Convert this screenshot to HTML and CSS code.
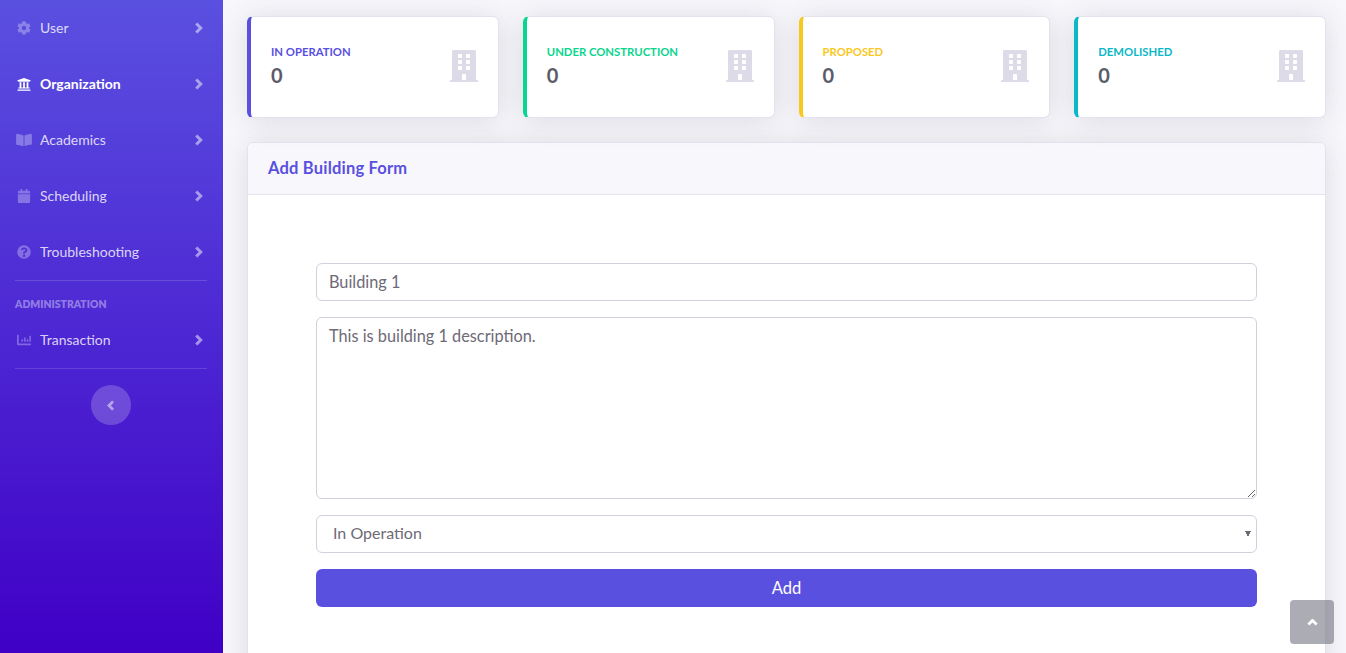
FILE: index.html
```html
<!DOCTYPE html>
<html lang="en">
<head>
    <meta charset="UTF-8">
    <meta name="viewport" content="width=device-width, initial-scale=1.0">
    <title>Add Building</title>
    <link rel="stylesheet" href="styles.css">
</head>
<body>
    <div class="wrapper">
        <nav class="sidebar">
            <a class="nav-item" href="#">
                <svg class="nav-icon" viewBox="0 0 512 512"><path d="M487 315l-43-25a196 196 0 0 0 0-68l43-25c5-3 7-9 5-14-11-36-30-68-55-95-4-4-10-5-15-2l-43 25a192 192 0 0 0-59-34V27c0-6-4-11-9-12-37-8-75-8-110 0-6 1-10 6-10 12v50a198 198 0 0 0-59 34L89 86c-5-3-11-2-15 2-25 27-44 59-55 95-2 5 0 11 5 14l43 25a196 196 0 0 0 0 68l-43 25c-5 3-7 9-5 14 11 36 30 68 55 95 4 4 10 5 15 2l43-25a192 192 0 0 0 59 34v50c0 6 4 11 10 12 37 8 75 8 110 0 5-1 9-6 9-12v-50a198 198 0 0 0 59-34l43 25c5 3 11 2 15-2 25-27 44-59 55-95 2-5 0-11-5-14zM256 336a80 80 0 1 1 0-160 80 80 0 0 1 0 160z"/></svg>
                <span class="nav-label">User</span>
                <svg class="nav-arrow" viewBox="0 0 10 16"><path d="M2 2l6 6-6 6"/></svg>
            </a>
            <a class="nav-item active" href="#">
                <svg class="nav-icon" viewBox="0 0 512 512"><path d="M496 128v16a8 8 0 0 1-8 8h-24v12c0 7-5 12-12 12H60c-7 0-12-5-12-12v-12H24a8 8 0 0 1-8-8v-16c0-3 2-6 5-7L253 33a8 8 0 0 1 6 0l232 88c3 1 5 4 5 7zm-24 328H40c-13 0-24 11-24 24v16c0 4 4 8 8 8h464c4 0 8-4 8-8v-16c0-13-11-24-24-24zM96 192v192H60c-7 0-12 5-12 12v28h416v-28c0-7-5-12-12-12h-36V192h-64v192h-64V192h-64v192h-64V192H96z"/></svg>
                <span class="nav-label">Organization</span>
                <svg class="nav-arrow" viewBox="0 0 10 16"><path d="M2 2l6 6-6 6"/></svg>
            </a>
            <a class="nav-item" href="#">
                <svg class="nav-icon wide" viewBox="0 0 576 512"><path d="M543 32c-55 3-164 15-231 56-5 3-8 8-8 14v362c0 11 13 19 24 14 69-35 168-44 217-47 17-1 31-14 31-31V63c0-18-15-32-33-31zM33 32C15 31 0 45 0 63v342c0 17 14 30 31 31 49 3 148 12 217 47 11 5 24-3 24-14V102c0-6-3-11-8-14C197 47 88 35 33 32z"/></svg>
                <span class="nav-label">Academics</span>
                <svg class="nav-arrow" viewBox="0 0 10 16"><path d="M2 2l6 6-6 6"/></svg>
            </a>
            <a class="nav-item" href="#">
                <svg class="nav-icon" viewBox="0 0 448 512"><path d="M12 192h424c7 0 12 5 12 12v260c0 27-21 48-48 48H48c-27 0-48-21-48-48V204c0-7 5-12 12-12zm436-44v-36c0-27-21-48-48-48h-48V12c0-7-5-12-12-12h-40c-7 0-12 5-12 12v52H160V12c0-7-5-12-12-12h-40c-7 0-12 5-12 12v52H48C21 64 0 85 0 112v36c0 7 5 12 12 12h424c7 0 12-5 12-12z"/></svg>
                <span class="nav-label">Scheduling</span>
                <svg class="nav-arrow" viewBox="0 0 10 16"><path d="M2 2l6 6-6 6"/></svg>
            </a>
            <a class="nav-item" href="#">
                <svg class="nav-icon" viewBox="0 0 512 512"><path d="M504 256a248 248 0 1 1-496 0 248 248 0 0 1 496 0zM263 90c-54 0-89 23-116 63-4 5-3 12 3 16l35 26c5 4 13 3 17-2 18-23 30-36 58-36 20 0 46 13 46 33 0 15-13 23-33 34-24 14-56 31-56 73v6c0 7 5 12 12 12h56c7 0 12-5 12-12v-3c0-29 85-31 85-110 0-59-61-100-119-100zm-7 254a46 46 0 1 0 0 92 46 46 0 0 0 0-92z"/></svg>
                <span class="nav-label">Troubleshooting</span>
                <svg class="nav-arrow" viewBox="0 0 10 16"><path d="M2 2l6 6-6 6"/></svg>
            </a>
            <hr class="nav-divider">
            <div class="nav-heading">ADMINISTRATION</div>
            <a class="nav-item short" href="#">
                <svg class="nav-icon" viewBox="0 0 512 512"><path d="M496 384H64V80c0-9-7-16-16-16H16C7 64 0 71 0 80v336c0 18 14 32 32 32h464c9 0 16-7 16-16v-32c0-9-7-16-16-16zM173 320h38c6 0 10-4 10-10v-69c0-6-4-10-10-10h-38c-6 0-10 4-10 10v69c0 6 4 10 10 10zm96 0h38c6 0 10-4 10-10V177c0-6-4-10-10-10h-38c-6 0-10 4-10 10v133c0 6 4 10 10 10zm96 0h38c6 0 10-4 10-10v-69c0-6-4-10-10-10h-38c-6 0-10 4-10 10v69c0 6 4 10 10 10zm96 0h38c6 0 10-4 10-10V113c0-6-4-10-10-10h-38c-6 0-10 4-10 10v197c0 6 4 10 10 10z"/></svg>
                <span class="nav-label">Transaction</span>
                <svg class="nav-arrow" viewBox="0 0 10 16"><path d="M2 2l6 6-6 6"/></svg>
            </a>
            <hr class="nav-divider last">
            <button class="sidebar-toggle">
                <svg viewBox="0 0 10 16"><path d="M8 2L2 8l6 6"/></svg>
            </button>
        </nav>

        <main class="content">
            <div class="stats">
                <div class="stat-card blue">
                    <div>
                        <div class="stat-title">IN OPERATION</div>
                        <div class="stat-value">0</div>
                    </div>
                    <svg class="stat-icon" viewBox="0 0 448 512"><use href="#building"/></svg>
                </div>
                <div class="stat-card green">
                    <div>
                        <div class="stat-title">UNDER CONSTRUCTION</div>
                        <div class="stat-value">0</div>
                    </div>
                    <svg class="stat-icon" viewBox="0 0 448 512"><use href="#building"/></svg>
                </div>
                <div class="stat-card yellow">
                    <div>
                        <div class="stat-title">PROPOSED</div>
                        <div class="stat-value">0</div>
                    </div>
                    <svg class="stat-icon" viewBox="0 0 448 512"><use href="#building"/></svg>
                </div>
                <div class="stat-card teal">
                    <div>
                        <div class="stat-title">DEMOLISHED</div>
                        <div class="stat-value">0</div>
                    </div>
                    <svg class="stat-icon" viewBox="0 0 448 512"><use href="#building"/></svg>
                </div>
            </div>

            <section class="form-card">
                <h2 class="form-header">Add Building Form</h2>
                <form class="form-body">
                    <input class="field line" type="text" value="Building 1">
                    <textarea class="field area">This is building 1 description.</textarea>
                    <select class="field pick">
                        <option>In Operation</option>
                        <option>Under Construction</option>
                        <option>Proposed</option>
                        <option>Demolished</option>
                    </select>
                    <button class="add-btn" type="button">Add</button>
                </form>
            </section>
        </main>
    </div>

    <a class="scroll-top" href="#">
        <svg viewBox="0 0 16 10"><path d="M2 8l6-6 6 6"/></svg>
    </a>

    <svg class="defs" width="0" height="0">
        <symbol id="building" viewBox="0 0 448 512">
            <path d="M436 480h-20V24c0-13.255-10.745-24-24-24H56C42.745 0 32 10.745 32 24v456H12c-6.627 0-12 5.373-12 12v20h448v-20c0-6.627-5.373-12-12-12zM128 76c0-6.627 5.373-12 12-12h40c6.627 0 12 5.373 12 12v40c0 6.627-5.373 12-12 12h-40c-6.627 0-12-5.373-12-12V76zm0 96c0-6.627 5.373-12 12-12h40c6.627 0 12 5.373 12 12v40c0 6.627-5.373 12-12 12h-40c-6.627 0-12-5.373-12-12v-40zm52 148h-40c-6.627 0-12-5.373-12-12v-40c0-6.627 5.373-12 12-12h40c6.627 0 12 5.373 12 12v40c0 6.627-5.373 12-12 12zm76 160h-64v-84c0-6.627 5.373-12 12-12h40c6.627 0 12 5.373 12 12v84zm64-172c0 6.627-5.373 12-12 12h-40c-6.627 0-12-5.373-12-12v-40c0-6.627 5.373-12 12-12h40c6.627 0 12 5.373 12 12v40zm0-96c0 6.627-5.373 12-12 12h-40c-6.627 0-12-5.373-12-12v-40c0-6.627 5.373-12 12-12h40c6.627 0 12 5.373 12 12v40zm0-96c0 6.627-5.373 12-12 12h-40c-6.627 0-12-5.373-12-12V76c0-6.627 5.373-12 12-12h40c6.627 0 12 5.373 12 12v40z"/>
        </symbol>
    </svg>
</body>
</html>
```

FILE: styles.css
```css
html, body {
    height: 100%;
    margin: 0;
    overflow: hidden;
}
body {
    font-family: Lato, "Open Sans", sans-serif;
    font-size: 16px;
    color: #6e6a76;
    background-color: #f8f7fc;
}
.wrapper {
    display: flex;
    height: 653px;
}
.defs {
    display: none;
}

/* sidebar */
.sidebar {
    width: 223px;
    flex-shrink: 0;
    box-sizing: border-box;
    padding: 0 16px 0 15px;
    background-image: linear-gradient(180deg, #5a50e0 0%, #4000c6 100%);
    display: flex;
    flex-direction: column;
}
.nav-item {
    height: 56px;
    margin: 0 -16px 0 -15px;
    padding: 0 20px 0 17px;
    display: flex;
    align-items: center;
    text-decoration: none;
    font-size: 14px;
    color: rgba(255, 255, 255, 0.8);
}
.nav-item.short {
    height: 40px;
}
.nav-item.active {
    color: #fff;
    font-weight: 700;
}
.nav-icon {
    width: 14px;
    height: 14px;
    fill: rgba(255, 255, 255, 0.3);
    flex-shrink: 0;
}
.nav-icon.wide {
    width: 16px;
    margin-left: -1px;
    margin-right: -1px;
}
.active .nav-icon {
    fill: #fff;
}
.nav-label {
    margin-left: 9px;
    margin-bottom: 1px;
    flex: 1;
}
.nav-arrow {
    width: 9px;
    height: 12px;
    fill: none;
    stroke: rgba(255, 255, 255, 0.5);
    stroke-width: 4;
}
.nav-divider {
    width: 192px;
    margin: 0;
    border: 0;
    border-top: 1px solid rgba(255, 255, 255, 0.15);
}
.nav-heading {
    margin-top: 17px;
    margin-bottom: 10px;
    line-height: 12px;
    font-size: 10.4px;
    font-weight: 800;
    color: rgba(255, 255, 255, 0.4);
}
.nav-divider.last {
    margin-top: 8px;
}
.sidebar-toggle {
    width: 40px;
    height: 40px;
    margin: 16px auto 0;
    padding: 0;
    border: 0;
    border-radius: 50%;
    background-color: rgba(255, 255, 255, 0.2);
    display: flex;
    align-items: center;
    justify-content: center;
}
.sidebar-toggle svg {
    width: 8px;
    height: 11px;
    fill: none;
    stroke: rgba(255, 255, 255, 0.5);
    stroke-width: 4;
}

/* main */
.content {
    flex: 1;
    padding: 16px 20px 0 24px;
    min-width: 0;
}
.stats {
    display: grid;
    grid-template-columns: repeat(4, 1fr);
    gap: 24px;
}
.stat-card {
    height: 102px;
    box-sizing: border-box;
    padding: 0 20px;
    display: flex;
    align-items: center;
    justify-content: space-between;
    background-color: #fff;
    border: 1px solid #e3e2ee;
    border-left-width: 4px;
    border-radius: 6px;
    box-shadow: 0 2px 28px rgba(58, 59, 69, 0.15);
}
.stat-card.blue { border-left-color: #5a50e0; }
.stat-card.green { border-left-color: #08d68f; }
.stat-card.yellow { border-left-color: #f9c81e; }
.stat-card.teal { border-left-color: #0ab8c8; }
.stat-title {
    font-size: 11.3px;
    font-weight: 700;
    line-height: 14px;
    margin-top: -3px;
}
.blue .stat-title { color: #5a50e0; }
.green .stat-title { color: #08d68f; }
.yellow .stat-title { color: #f9c81e; }
.teal .stat-title { color: #0ab8c8; }
.stat-value {
    font-size: 20px;
    font-weight: 700;
    line-height: 24px;
    margin-top: 4px;
    color: #5a5c69;
}
.stat-icon {
    width: 28px;
    height: 32px;
    margin-top: -2px;
    fill: #dddbe8;
}

.form-card {
    margin-top: 24px;
    height: 600px;
    background-color: #fff;
    border: 1px solid #e3e2ee;
    border-radius: 6px;
    box-shadow: 0 2px 28px rgba(58, 59, 69, 0.15);
}
.form-header {
    margin: 0;
    height: 52px;
    box-sizing: border-box;
    padding: 0 20px 2px;
    display: flex;
    align-items: center;
    background-color: #f8f7fc;
    border-bottom: 1px solid #e3e2ee;
    border-radius: 6px 6px 0 0;
    font-size: 16.5px;
    letter-spacing: 0.2px;
    font-weight: 700;
    color: #5a50e0;
}
.form-body {
    padding: 68px 68px 0;
    display: flex;
    flex-direction: column;
    gap: 16px;
}
.field {
    height: 38px;
    box-sizing: border-box;
    padding: 6px 12px;
    border: 1px solid #d2cfdf;
    border-radius: 6px;
    background-color: #fff;
    font-family: inherit;
    font-size: 16.3px;
    color: #6e6a76;
    width: 100%;
}
.field.line {
    padding-top: 5px;
    padding-bottom: 7px;
}
.field.area {
    height: 182px;
    line-height: 24px;
    display: block;
}
.field.pick {
    appearance: none;
    padding: 4px 12px 8px 16px;
    font-size: 16px;
    background-image: linear-gradient(to top right, transparent 50%, #6e6a76 50%), linear-gradient(to top left, transparent 50%, #6e6a76 50%);
    background-size: 3px 6px, 3px 6px;
    background-position: right 8px top 15px, right 5px top 15px;
    background-repeat: no-repeat;
}
.add-btn {
    height: 38px;
    border: 0;
    border-radius: 6px;
    background-color: #5a50e0;
    color: #fff;
    font-family: inherit;
    font-size: 16.5px;
}

.scroll-top {
    position: fixed;
    right: 12px;
    bottom: 9px;
    width: 44px;
    height: 44px;
    border-radius: 4px;
    background-color: rgba(90, 92, 105, 0.5);
    display: flex;
    align-items: center;
    justify-content: center;
}
.scroll-top svg {
    width: 11px;
    height: 7px;
    fill: none;
    stroke: #fff;
    stroke-width: 4;
}
```
